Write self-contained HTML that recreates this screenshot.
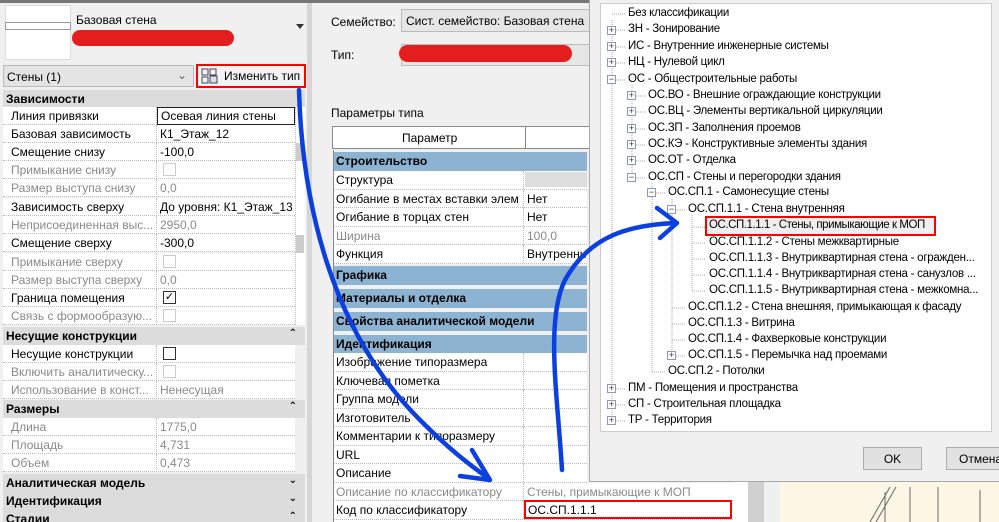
<!DOCTYPE html>
<html style="overflow:hidden"><head><meta charset="utf-8"><style>
*{margin:0;padding:0;box-sizing:border-box}
html,body{width:999px;height:522px;overflow:hidden}
body{background:#f0f0f0;font-family:"Liberation Sans","DejaVu Sans",sans-serif;font-size:12px;color:#000}
#w{position:relative;width:999px;height:522px;overflow:hidden}
.a{position:absolute;white-space:nowrap}
.lr{position:absolute;left:3px;width:292px;height:18px;border-bottom:1px dotted #bbb;background:#fff}
.lr .k{position:absolute;left:8px;top:2px}
.lr .v{position:absolute;left:157px;top:2px}
.lr .d{position:absolute;left:153px;top:0;height:18px;border-left:1px dotted #bbb}
.g{color:#8a8a8a}
.lh{position:absolute;left:3px;width:302px;height:18px;background:#dcdcdc;font-weight:bold;padding:2px 0 0 3px}
.lh span{position:absolute;right:8px;top:1px;font-size:10px}
.cb{position:absolute;left:160px;top:2px;width:13px;height:13px;border:1px solid #333;background:#fff}
.cb.g2{border-color:#ccc}
.mr{position:absolute;left:333px;width:254px;height:18.5px;background:#fff;border-bottom:1px dotted #bbb}
.mr .k{position:absolute;left:3px;top:2px}
.mr .v{position:absolute;left:194px;top:2px}
.mr .d{position:absolute;left:190px;top:0;height:18px;border-left:1px dotted #bbb}
.mh{position:absolute;left:333px;width:254px;height:19px;background:#8db3d3;font-weight:bold;padding:2px 0 0 3px}
.t{position:absolute;white-space:nowrap;font-size:11.5px;letter-spacing:-0.25px}
.pb{position:absolute;width:9px;height:9px;border:1px solid #8a9ab0;background:#fff;font-size:9px;line-height:7px;text-align:center;color:#334}
</style></head><body><div id="w">
<div class="a" style="left:0;top:0;width:999px;height:3px;background:#777"></div>
<div class="a" style="left:0;top:3px;width:307px;height:519px;background:#f0f0f0"></div>
<div class="a" style="left:5px;top:5px;width:66px;height:55px;background:#fff;border:1px solid #ddd"></div>
<div class="a" style="left:5px;top:22px;width:66px;height:8px;border:1px solid #999;background:#fff"></div>
<div class="a" style="left:76px;top:13px">Базовая стена</div>
<div class="a" style="left:72px;top:30px;width:162px;height:16px;background:#e41e1e;border-radius:8px"></div>
<div class="a" style="left:296px;top:24px;width:0;height:0;border-left:4px solid transparent;border-right:4px solid transparent;border-top:5px solid #333"></div>
<div class="a" style="left:3px;top:65px;width:191px;height:22px;background:#e4e4e4;border:1px solid #bbb;padding:4px 0 0 3px">Стены (1)<span style="position:absolute;right:6px;top:2px;color:#666">⌄</span></div>
<div class="a" style="left:196px;top:64px;width:110px;height:24px;border:2px solid #f00;background:#f3f3f3;padding:3px 0 0 26px">Изменить тип</div>
<svg class="a" style="left:201px;top:68px" width="18" height="16"><rect x="1" y="1" width="6" height="6" fill="none" stroke="#445"/><rect x="9" y="1" width="6" height="6" fill="none" stroke="#445"/><rect x="1" y="9" width="6" height="6" fill="none" stroke="#445"/><rect x="9" y="8" width="7" height="7" fill="#dde" stroke="#445"/></svg>
<div class="lh" style="top:90px">Зависимости</div>
<div class="lr" style="top:107px"><span class="k">Линия привязки</span><span class="d"></span><span style="position:absolute;left:154px;top:0;width:138px;height:18px;border:1px solid #222;background:#fff;padding:1px 0 0 3px">Осевая линия стены</span></div>
<div class="lr" style="top:125px"><span class="k">Базовая зависимость</span><span class="d"></span><span class="v">К1_Этаж_12</span></div>
<div class="lr" style="top:143px"><span class="k">Смещение снизу</span><span class="d"></span><span class="v">-100,0</span></div>
<div class="lr" style="top:161px"><span class="k g">Примыкание снизу</span><span class="d"></span><span class="cb g2"></span></div>
<div class="lr" style="top:179px"><span class="k g">Размер выступа снизу</span><span class="d"></span><span class="v g">0,0</span></div>
<div class="lr" style="top:198px"><span class="k">Зависимость сверху</span><span class="d"></span><span class="v">До уровня: К1_Этаж_13</span></div>
<div class="lr" style="top:216px"><span class="k g">Неприсоединенная выс...</span><span class="d"></span><span class="v g">2950,0</span></div>
<div class="lr" style="top:234px"><span class="k">Смещение сверху</span><span class="d"></span><span class="v">-300,0</span></div>
<div class="lr" style="top:253px"><span class="k g">Примыкание сверху</span><span class="d"></span><span class="cb g2"></span></div>
<div class="lr" style="top:271px"><span class="k g">Размер выступа сверху</span><span class="d"></span><span class="v g">0,0</span></div>
<div class="lr" style="top:289px"><span class="k">Граница помещения</span><span class="d"></span><span class="cb" style="font-size:11px;line-height:11px;text-align:center">✓</span></div>
<div class="lr" style="top:307px"><span class="k g">Связь с формообразую...</span><span class="d"></span><span class="cb g2"></span></div>
<div class="lh" style="top:327px">Несущие конструкции<span>⌃</span></div>
<div class="lr" style="top:345px"><span class="k">Несущие конструкции</span><span class="d"></span><span class="cb"></span></div>
<div class="lr" style="top:363px"><span class="k g">Включить аналитическу...</span><span class="d"></span><span class="cb g2"></span></div>
<div class="lr" style="top:381px"><span class="k g">Использование в конст...</span><span class="d"></span><span class="v g">Ненесущая</span></div>
<div class="lh" style="top:400px">Размеры<span>⌃</span></div>
<div class="lr" style="top:418px"><span class="k g">Длина</span><span class="d"></span><span class="v g">1775,0</span></div>
<div class="lr" style="top:436px"><span class="k g">Площадь</span><span class="d"></span><span class="v g">4,731</span></div>
<div class="lr" style="top:454px"><span class="k g">Объем</span><span class="d"></span><span class="v g">0,473</span></div>
<div class="lh" style="top:474px">Аналитическая модель<span>⌄</span></div>
<div class="lh" style="top:492px">Идентификация<span>⌄</span></div>
<div class="lh" style="top:510px">Стадии<span>⌃</span></div>
<div class="a" style="left:295px;top:107px;width:10px;height:218px;background:#fff;border-left:1px dotted #bbb"></div>
<div class="a" style="left:296px;top:143px;width:8px;height:18px;background:#ccc"></div>
<div class="a" style="left:296px;top:235px;width:8px;height:18px;background:#ccc"></div>
<div class="a" style="left:307px;top:3px;width:5px;height:519px;background:#d6d6d6"></div>
<div class="a" style="left:331px;top:15px">Семейство:</div>
<div class="a" style="left:401px;top:9px;width:190px;height:23px;background:#e6e6e6;border:1px solid #bbb;padding:4px 0 0 4px">Сист. семейство: Базовая стена</div>
<div class="a" style="left:331px;top:48px">Тип:</div>
<div class="a" style="left:401px;top:44px;width:190px;height:22px;background:#e6e6e6;border:1px solid #bbb"></div>
<div class="a" style="left:399px;top:45px;width:173px;height:17px;background:#e41e1e;border-radius:9px"></div>
<div class="a" style="left:331px;top:106px">Параметры типа</div>
<div class="a" style="left:332px;top:126px;width:258px;height:23px;background:#fff;border:1px solid #888"></div>
<div class="a" style="left:402px;top:131px">Параметр</div>
<div class="a" style="left:525px;top:127px;height:22px;border-left:1px solid #888"></div>
<div class="mh" style="top:152px">Строительство</div>
<div class="mr" style="top:171px"><span class="k">Структура</span><span class="d"></span><span style="position:absolute;left:192px;top:1px;width:62px;height:15px;background:#ddd"></span></div>
<div class="mr" style="top:189.5px"><span class="k">Огибание в местах вставки элем</span><span class="d"></span><span class="v">Нет</span></div>
<div class="mr" style="top:208px"><span class="k">Огибание в торцах стен</span><span class="d"></span><span class="v">Нет</span></div>
<div class="mr" style="top:226.5px"><span class="k g">Ширина</span><span class="d"></span><span class="v g">100,0</span></div>
<div class="mr" style="top:245px"><span class="k">Функция</span><span class="d"></span><span class="v">Внутренни</span></div>
<div class="mh" style="top:266px">Графика</div>
<div class="mh" style="top:289px">Материалы и отделка</div>
<div class="mh" style="top:312px">Свойства аналитической модели</div>
<div class="mh" style="top:335px">Идентификация</div>
<div class="mr" style="top:353px"><span class="k">Изображение типоразмера</span><span class="d"></span></div>
<div class="mr" style="top:371.5px"><span class="k">Ключевая пометка</span><span class="d"></span></div>
<div class="mr" style="top:390px"><span class="k">Группа модели</span><span class="d"></span></div>
<div class="mr" style="top:408.5px"><span class="k">Изготовитель</span><span class="d"></span></div>
<div class="mr" style="top:427px"><span class="k">Комментарии к типоразмеру</span><span class="d"></span></div>
<div class="mr" style="top:445.5px"><span class="k">URL</span><span class="d"></span></div>
<div class="mr" style="top:464px"><span class="k">Описание</span><span class="d"></span></div>
<div class="mr" style="top:482.5px;width:420px"><span class="k g">Описание по классификатору</span><span class="d"></span><span class="v g">Стены, примыкающие к МОП</span></div>
<div class="mr" style="top:501px;width:420px"><span class="k">Код по классификатору</span><span class="d"></span><span style="position:absolute;left:191px;top:-1px;width:208px;height:19px;border:2px solid #f00;padding:1px 0 0 2px">ОС.СП.1.1.1</span></div>
<div class="mr" style="top:519.5px;width:420px"></div>
<div class="a" style="left:333px;top:150px;height:372px;border-left:1px solid #888"></div>
<div class="a" style="left:733px;top:480px;width:20px;height:42px;background:#fff"></div>
<div class="a" style="left:748px;top:482px;width:16px;height:40px;background:#d0d0d0"></div>
<div class="a" style="left:780px;top:482px;width:219px;height:40px;background:#fbf7e4"></div>
<svg class="a" style="left:780px;top:482px" width="219" height="40"><path d="M90 40 L110 5 M96 40 L116 5 M105 10 L105 40 M130 5 L130 40 M158 5 L158 40 M200 8 L200 40" stroke="#666" fill="none"/></svg>
<div class="a" style="left:589px;top:0;width:410px;height:482px;background:#f0f0f0;border-left:1px solid #aaa;border-bottom:1px solid #aaa"></div>
<div class="a" style="left:600px;top:3px;width:392px;height:429px;background:#fff;border:1px solid #ccc"></div>
<div class="a" style="left:863px;top:447px;width:59px;height:23px;background:#e1e1e1;border:1px solid #adadad;text-align:center;padding-top:4px">OK</div>
<div class="a" style="left:946px;top:447px;width:60px;height:23px;background:#e1e1e1;border:1px solid #adadad;padding:4px 0 0 12px">Отмена</div>
<svg class="a" style="left:600px;top:3px" width="395" height="429"><g stroke="#aaa" stroke-dasharray="1 1" fill="none">
<path d="M12 11 H26 M12 27 H26 M12 44 H26 M12 60 H26 M12 77 H26 M12 17 V420 M12 386 H26 M12 402 H26 M12 418 H26"/>
<path d="M32 82 V175 M32 93 H46 M32 109 H46 M32 126 H46 M32 142 H46 M32 158 H46 M32 175 H46"/>
<path d="M52 180 V369 M52 190 H66 M52 369 H66"/>
<path d="M72 196 V353 M72 207 H86 M72 305 H86 M72 321 H86 M72 337 H86 M72 353 H86"/>
<path d="M92 212 V288 M92 224 H106 M92 240 H106 M92 256 H106 M92 272 H106 M92 288 H106"/>
</g></svg>
<div class="pb" style="left:607px;top:26px">+</div>
<div class="pb" style="left:607px;top:42px">+</div>
<div class="pb" style="left:607px;top:58px">+</div>
<div class="pb" style="left:607px;top:75px">−</div>
<div class="pb" style="left:627px;top:91px">+</div>
<div class="pb" style="left:627px;top:107px">+</div>
<div class="pb" style="left:627px;top:124px">+</div>
<div class="pb" style="left:627px;top:140px">+</div>
<div class="pb" style="left:627px;top:156px">+</div>
<div class="pb" style="left:627px;top:173px">−</div>
<div class="pb" style="left:647px;top:188px">−</div>
<div class="pb" style="left:667px;top:205px">−</div>
<div class="pb" style="left:667px;top:351px">+</div>
<div class="pb" style="left:607px;top:384px">+</div>
<div class="pb" style="left:607px;top:400px">+</div>
<div class="pb" style="left:607px;top:416px">+</div>
<div class="t" style="left:628px;top:7px">Без классификации</div>
<div class="t" style="left:628px;top:23px">ЗН - Зонирование</div>
<div class="t" style="left:628px;top:40px">ИС - Внутренние инженерные системы</div>
<div class="t" style="left:628px;top:56px">НЦ - Нулевой цикл</div>
<div class="t" style="left:628px;top:73px">ОС - Общестроительные работы</div>
<div class="t" style="left:648px;top:89px">ОС.ВО - Внешние ограждающие конструкции</div>
<div class="t" style="left:648px;top:105px">ОС.ВЦ - Элементы вертикальной циркуляции</div>
<div class="t" style="left:648px;top:122px">ОС.ЗП - Заполнения проемов</div>
<div class="t" style="left:648px;top:138px">ОС.КЭ - Конструктивные элементы здания</div>
<div class="t" style="left:648px;top:154px">ОС.ОТ - Отделка</div>
<div class="t" style="left:648px;top:171px">ОС.СП - Стены и перегородки здания</div>
<div class="t" style="left:668px;top:186px">ОС.СП.1 - Самонесущие стены</div>
<div class="t" style="left:688px;top:203px">ОС.СП.1.1 - Стена внутренняя</div>
<div class="a" style="left:705px;top:216px;width:231px;height:20px;border:2px solid #f00;background:#eee"></div>
<div class="t" style="left:709px;top:219px;letter-spacing:-0.45px">ОС.СП.1.1.1 - Стены, примыкающие к МОП</div>
<div class="t" style="left:709px;top:236px">ОС.СП.1.1.2 - Стены межквартирные</div>
<div class="t" style="left:709px;top:252px">ОС.СП.1.1.3 - Внутриквартирная стена - огражден...</div>
<div class="t" style="left:709px;top:268px">ОС.СП.1.1.4 - Внутриквартирная стена - санузлов ...</div>
<div class="t" style="left:709px;top:284px">ОС.СП.1.1.5 - Внутриквартирная стена - межкомна...</div>
<div class="t" style="left:688px;top:301px">ОС.СП.1.2 - Стена внешняя, примыкающая к фасаду</div>
<div class="t" style="left:688px;top:317px">ОС.СП.1.3 - Витрина</div>
<div class="t" style="left:688px;top:333px">ОС.СП.1.4 - Фахверковые конструкции</div>
<div class="t" style="left:688px;top:349px">ОС.СП.1.5 - Перемычка над проемами</div>
<div class="t" style="left:668px;top:365px">ОС.СП.2 - Потолки</div>
<div class="t" style="left:628px;top:382px">ПМ - Помещения и пространства</div>
<div class="t" style="left:628px;top:398px">СП - Строительная площадка</div>
<div class="t" style="left:628px;top:414px">ТР - Территория</div>
<svg class="a" style="left:0;top:0" width="999" height="522"><g stroke="#0b3fe0" stroke-width="4.5" fill="none" stroke-linecap="round" stroke-linejoin="round">
<path d="M299 90 C302 200 330 330 420 420 C450 450 470 465 488 478"/>
<path d="M472 450 L490 480 L460 476"/>
<path d="M562 470 C558 400 545 320 565 280 C590 235 630 225 675 223"/>
<path d="M657 208 L677 223 L660 238"/>
</g></svg>
</div></body></html>
